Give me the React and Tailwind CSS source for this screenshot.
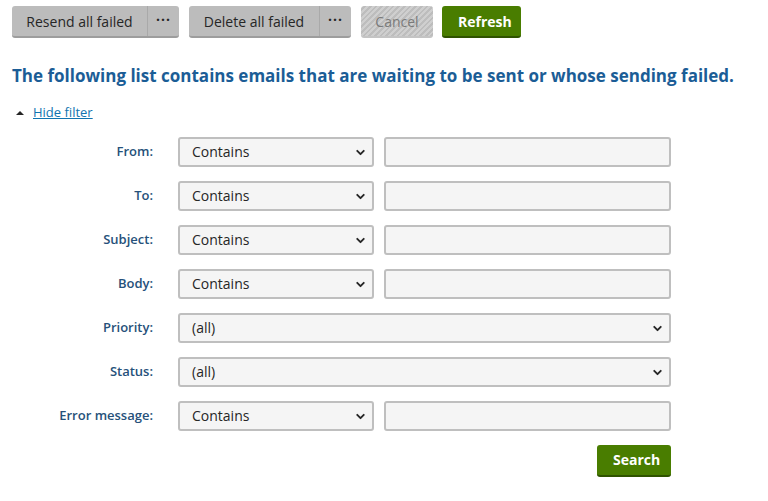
import { ChevronDown } from 'lucide-react'

const font = { fontFamily: '"Open Sans", "Noto Sans", sans-serif' }

function Btn({ children, className = '' }) {
  return (
    <button
      type="button"
      className={`h-[32px] px-4 text-[14px] rounded-[3px] border-b-2 ${className}`}
    >
      {children}
    </button>
  )
}

function SplitBtn({ label, w }) {
  return (
    <div className="flex h-[32px] rounded-[3px] bg-[#bcbcbc] border-b-2 border-[#9d9d9d] text-[#262626] text-[14px]">
      <span className={`flex items-center justify-center ${w} border-r border-[#a9a9a9]`}>{label}</span>
      <span className="flex items-center justify-center w-[31px] font-bold tracking-[1px] pb-[4px]">···</span>
    </div>
  )
}

function Select({ value, wide }) {
  return (
    <div
      className={`relative flex items-center h-[30px] ${wide ? 'col-span-2' : ''} bg-[#f5f5f5] border-2 border-[#bfbfbf] rounded-[3px] pl-[12px] text-[14px] text-[#262626]`}
    >
      {value}
      <ChevronDown className="absolute right-[5px] top-[7px] w-[13px] h-[13px] text-[#262626]" strokeWidth={3.5} />
    </div>
  )
}

function Input() {
  return <div className="h-[30px] bg-[#f5f5f5] border-2 border-[#bfbfbf] rounded-[3px]" />
}

const rows = [
  ['From:', 'Contains', false],
  ['To:', 'Contains', false],
  ['Subject:', 'Contains', false],
  ['Body:', 'Contains', false],
  ['Priority:', '(all)', true],
  ['Status:', '(all)', true],
  ['Error message:', 'Contains', false],
]

export default function App() {
  return (
    <div className="w-[768px] h-[501px] bg-white overflow-hidden" style={font}>
      <div className="flex gap-[10px] pl-[12px] pt-[6px]">
        <SplitBtn label="Resend all failed" w="w-[136px]" />
        <SplitBtn label="Delete all failed" w="w-[131px]" />
        <button
          type="button"
          className="h-[32px] w-[72px] rounded-[3px] border-b-2 border-[#c4c4c4] text-[14px] text-[#7a7a7a]"
          style={{
            backgroundImage:
              'repeating-linear-gradient(135deg, #cfcfcf 0px, #cfcfcf 2px, #bdbdbd 2px, #bdbdbd 4px)',
          }}
        >
          Cancel
        </button>
        <Btn className="w-[79px] -ml-[1px] bg-[#497d00] border-[#2f5300] text-white font-bold">Refresh</Btn>
      </div>

      <h1 className="pl-[12px] mt-[26px] text-[17px] font-bold text-[#1b5d96] leading-[24px]">
        The following list contains emails that are waiting to be sent or whose sending failed.
      </h1>

      <div className="flex items-center pl-[16px] mt-[15px] text-[13px]">
        <span className="w-0 h-0 border-l-[4px] border-r-[4px] border-b-[4px] border-l-transparent border-r-transparent border-b-[#262626] mr-[9px]" />
        <a className="text-[#1174b0] underline">Hide filter</a>
      </div>

      <div className="grid grid-cols-[157px_196px_287px] gap-x-[10px] gap-y-[14px] pl-[11px] mt-[14px]">
        {rows.map(([label, value, wide]) => (
          <div key={label} className="contents">
            <div className="flex items-center justify-end h-[30px] mr-[15px] text-[13px] font-semibold text-[#26517a]">
              {label}
            </div>
            <Select value={value} wide={wide} />
            {!wide && <Input />}
          </div>
        ))}
        <div className="col-start-3 flex justify-end">
          <Btn className="w-[74px] bg-[#497d00] border-[#2f5300] text-white font-bold">Search</Btn>
        </div>
      </div>
    </div>
  )
}
